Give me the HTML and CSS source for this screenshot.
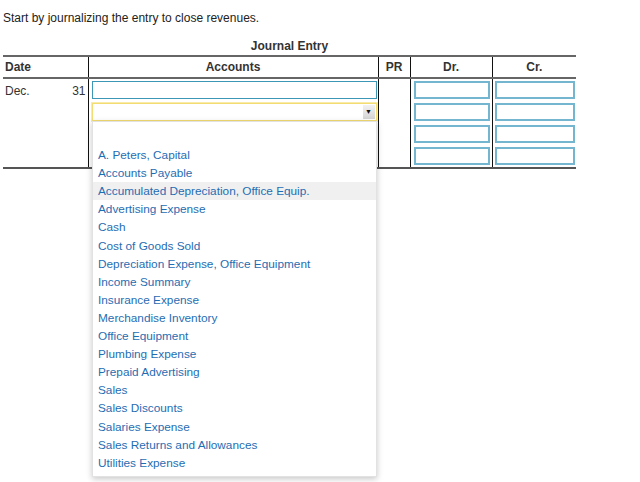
FILE: index.html
```html
<!DOCTYPE html>
<html>
<head>
<meta charset="utf-8">
<link rel="stylesheet" href="styles.css">
</head>
<body>
<div class="page">
  <p class="intro">Start by journalizing the entry to close revenues.</p>
  <div class="journal">
    <div class="caption">Journal Entry</div>
    <table class="grid">
      <colgroup>
        <col class="c-mon"><col class="c-day"><col class="c-acc"><col class="c-pr"><col class="c-dr"><col class="c-cr">
      </colgroup>
      <thead>
        <tr>
          <th class="th-date" colspan="2">Date</th>
          <th class="th-acc">Accounts</th>
          <th class="th-pr">PR</th>
          <th class="th-dr">Dr.</th>
          <th class="th-cr">Cr.</th>
        </tr>
      </thead>
      <tbody>
        <tr>
          <td class="mon">Dec.</td>
          <td class="day">31</td>
          <td class="acc"><div class="field field-acc"></div></td>
          <td class="pr" rowspan="4"></td>
          <td class="num"><div class="field"></div></td>
          <td class="num last"><div class="field"></div></td>
        </tr>
        <tr>
          <td class="mon"></td>
          <td class="day"></td>
          <td class="acc"><div class="select"><span class="arrow">&#9660;</span></div></td>
          <td class="num"><div class="field"></div></td>
          <td class="num last"><div class="field"></div></td>
        </tr>
        <tr>
          <td class="mon"></td>
          <td class="day"></td>
          <td class="acc"></td>
          <td class="num"><div class="field"></div></td>
          <td class="num last"><div class="field"></div></td>
        </tr>
        <tr>
          <td class="mon"></td>
          <td class="day"></td>
          <td class="acc"></td>
          <td class="num"><div class="field"></div></td>
          <td class="num last"><div class="field"></div></td>
        </tr>
      </tbody>
    </table>
    <ul class="menu">
      <li class="blank">&nbsp;</li>
      <li>A. Peters, Capital</li>
      <li>Accounts Payable</li>
      <li class="hover">Accumulated Depreciation, Office Equip.</li>
      <li>Advertising Expense</li>
      <li>Cash</li>
      <li>Cost of Goods Sold</li>
      <li>Depreciation Expense, Office Equipment</li>
      <li>Income Summary</li>
      <li>Insurance Expense</li>
      <li>Merchandise Inventory</li>
      <li>Office Equipment</li>
      <li>Plumbing Expense</li>
      <li>Prepaid Advertising</li>
      <li>Sales</li>
      <li>Sales Discounts</li>
      <li>Salaries Expense</li>
      <li>Sales Returns and Allowances</li>
      <li>Utilities Expense</li>
    </ul>
  </div>
</div>
</body>
</html>
```
FILE: styles.css
```css
html, body {
  margin: 0;
  padding: 0;
  background: #fff;
}
body {
  min-height: 482px;
  font-family: "Liberation Sans", Arial, sans-serif;
  font-size: 12px;
  color: #333;
}
.page {
  padding: 11px 0 0 3px;
  width: 573px;
}
.intro {
  margin: 0;
  line-height: 14px;
  color: #222;
}
.journal {
  position: relative;
  margin-top: 15px;
}
.caption {
  text-align: center;
  font-weight: bold;
  line-height: 13px;
  color: #333;
  padding-bottom: 2px;
}
.grid {
  border-collapse: collapse;
  width: 573px;
  table-layout: fixed;
}
.c-mon { width: 45px; }
.c-day { width: 40px; }
.c-acc { width: 290px; }
.c-pr { width: 32px; }
.c-dr { width: 82px; }
.c-cr { width: 84px; }
.grid th {
  height: 20px;
  padding: 0;
  font-weight: bold;
  color: #333;
  border-top: 2px solid #666;
  border-bottom: 2px solid #666;
  text-align: center;
}
.grid th.th-date {
  text-align: left;
  padding-left: 2px;
}
.grid th.th-acc,
.grid th.th-pr,
.grid th.th-dr,
.grid th.th-cr {
  border-left: 1px solid #111;
}
.grid td {
  height: 22px;
  padding: 0;
  vertical-align: middle;
}
.grid tbody tr:last-child td {
  border-bottom: 2px solid #555;
}
.grid td.mon {
  padding-left: 2px;
  vertical-align: top;
  padding-top: 5px;
  height: 17px;
}
.grid td.day {
  text-align: right;
  padding-right: 2px;
  vertical-align: top;
  padding-top: 5px;
  height: 17px;
}
.grid td.acc {
  border-left: 1px solid #111;
  padding: 0 1px 0 3px;
}
.grid td.pr {
  border-left: 1px solid #111;
  border-right: 1px solid #111;
  border-bottom: 2px solid #555;
}
.grid td.num {
  padding: 0 2px 0 3px;
}
.grid td.num.last {
  border-left: 1px solid #111;
  padding: 0 1px 0 2px;
}
.field {
  height: 14px;
  border: 2px solid #74b6cf;
  background: #fff;
}
.field-acc {
  border: 1px solid #3c96b6;
  height: 16px;
}
.select {
  position: relative;
  height: 16px;
  border: 1px solid #f3dd73;
  box-shadow: 0 0 0 1px #f8ecaa;
  background: #fff;
}
.arrow {
  position: absolute;
  right: 1px;
  top: 1px;
  width: 12px;
  height: 14px;
  background: linear-gradient(#f2f2f2, #d4d4d4);
  font-size: 7px;
  line-height: 14px;
  text-align: center;
  color: #111;
}
.menu {
  position: absolute;
  left: 89px;
  top: 81px;
  width: 283px;
  margin: 0;
  padding: 6px 0 4px;
  list-style: none;
  background: #fff;
  border: 1px solid #e2e2e2;
  box-shadow: 0 2px 6px rgba(0, 0, 0, 0.22);
  z-index: 5;
}
.menu li {
  height: 18.1px;
  line-height: 18px;
  padding-left: 5px;
  font-size: 11.8px;
  color: #1f6db3;
  white-space: nowrap;
}
.menu li.hover {
  background: #f0f0f0;
}
```
